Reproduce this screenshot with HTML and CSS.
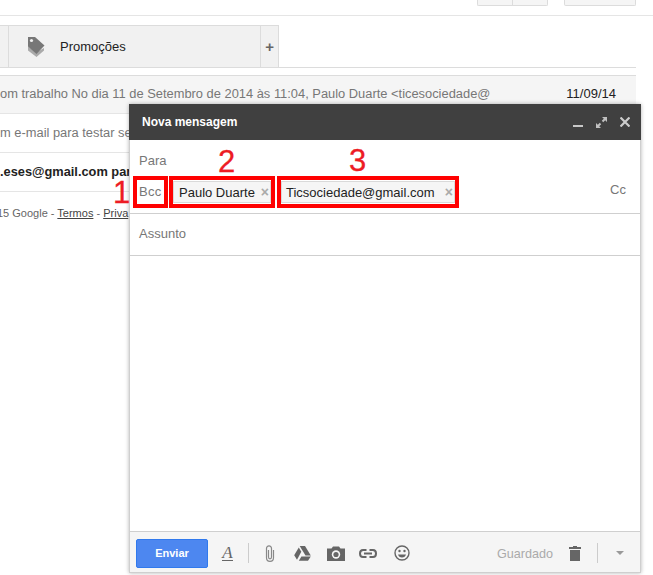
FILE: index.html
```html
<!DOCTYPE html>
<html lang="pt">
<head>
  <meta charset="UTF-8">
  <meta name="viewport" content="width=device-width, initial-scale=1">
  <title>Nova mensagem</title>
  <link rel="stylesheet" href="styles.css">
</head>
<body>
  <!-- Inbox behind the compose window -->
  <div class="topbar">
    <div class="btn-group">
      <div class="top-btn"></div>
      <div class="top-btn"></div>
    </div>
    <div class="top-btn top-btn-wide"></div>
  </div>

  <div class="tabs">
    <div class="tab tab-stub"></div>
    <div class="tab tab-promo">
      <svg class="tag-icon" width="18" height="22" viewBox="0 0 18 22">
        <path fill="#aaa" d="M1 10.5 L9 16.5 L17 12 L17 14.5 L9.500 21 L1 14.500 Z"/>
        <path fill="#777" d="M1 1 L8 1 L17.500 9.500 L9.500 18 L1 10.500 Z"/>
        <circle cx="4.500" cy="4.500" r="1.600" fill="#f1f1f1"/>
      </svg>
      <span>Promoções</span>
    </div>
    <div class="tab tab-add">+</div>
  </div>

  <div class="mail-list">
    <div class="mail-row mail-row-read">
      <span class="snippet">om trabalho No dia 11 de Setembro de 2014 às 11:04, Paulo Duarte &lt;ticesociedade@</span>
      <span class="mail-date">11/09/14</span>
    </div>
    <div class="mail-row">
      <span class="snippet">m e-mail para testar se</span>
    </div>
    <div class="mail-row">
      <span class="sender">.eses@gmail.com par</span>
    </div>
  </div>
  <div class="footer-links">15 Google - <a href="#">Termos</a> - <a href="#">Priva</a></div>

  <!-- Compose window -->
  <section class="compose">
    <header class="compose-head">
      <span class="compose-title">Nova mensagem</span>
      <div class="head-icons">
        <svg width="10" height="11" viewBox="0 0 10 11"><rect x="0" y="8" width="10" height="2" fill="#c8c8c8"/></svg>
        <svg width="11" height="11" viewBox="0 0 11 11" fill="#c0c0c0">
          <path d="M6 0 H11 V5 L9.200 3.200 L7.200 5.200 L5.800 3.800 L7.800 1.800 Z"/>
          <path d="M5 11 H0 V6 L1.800 7.800 L3.800 5.800 L5.200 7.200 L3.200 9.200 Z"/>
        </svg>
        <svg width="10" height="10" viewBox="0 0 10 10"><path d="M0.500 0.500 L9.500 9.500 M9.500 0.500 L0.500 9.500" stroke="#ccc" stroke-width="2.200"/></svg>
      </div>
    </header>

    <div class="field field-para">Para</div>
    <div class="field-recipients">
      <span class="label-bcc">Bcc</span>
      <span class="chip chip-first">Paulo Duarte<i class="chip-x">×</i></span>
      <span class="chip chip-second">Ticsociedade@gmail.com<i class="chip-x">×</i></span>
      <span class="label-cc">Cc</span>
    </div>
    <div class="field field-subject">Assunto</div>
    <div class="compose-body"></div>

    <footer class="compose-tools">
      <button class="send-btn">Enviar</button>
      <span class="format-a">A</span>
      <span class="tool-sep"></span>
      <svg class="tool tool-clip" width="10" height="17" viewBox="0 0 10 17" fill="none" stroke="#888" stroke-width="1.200">
        <path d="M8.500 5 V12.500 C8.500 15 7 16.400 5 16.400 C3 16.400 1.500 15 1.500 12.500 V3.500 C1.500 2 2.500 0.800 4 0.800 C5.500 0.800 6.500 2 6.500 3.500 V12 C6.500 13 6 13.800 5 13.800 C4 13.800 3.500 13 3.500 12 V5"/>
      </svg>
      <svg class="tool tool-drive" width="17" height="15" viewBox="0 0 17 15" fill="#666">
        <path d="M5.700 0 H11 L16.800 9.500 H11.500 Z"/>
        <path d="M4.800 1.500 L7.300 5.800 L3 13.800 L0.200 9.300 Z"/>
        <path d="M7.400 10.500 H16.800 L14 14.800 H4.800 Z"/>
      </svg>
      <svg class="tool tool-camera" width="18" height="15" viewBox="0 0 18 15">
        <path fill="#666" d="M0 2.500 H4.500 L6 0.500 H12 L13.500 2.500 H18 V15 H0 Z"/>
        <circle cx="9" cy="8.500" r="4.200" fill="#f5f5f5"/>
        <circle cx="9" cy="8.500" r="2.600" fill="#666"/>
      </svg>
      <svg class="tool tool-link" width="18" height="9" viewBox="0 0 18 9" fill="none" stroke="#666" stroke-width="2">
        <path d="M7.500 1 H4 C2 1 1 2.500 1 4.500 C1 6.500 2 8 4 8 H7.500"/>
        <path d="M10.500 1 H14 C16 1 17 2.500 17 4.500 C17 6.500 16 8 14 8 H10.500"/>
        <path d="M5 4.500 H13"/>
      </svg>
      <svg class="tool tool-smile" width="16" height="16" viewBox="0 0 16 16">
        <circle cx="8" cy="8" r="7" fill="none" stroke="#666" stroke-width="1.400"/>
        <circle cx="5.500" cy="6" r="1.200" fill="#666"/>
        <circle cx="10.500" cy="6" r="1.200" fill="#666"/>
        <path d="M4 9.500 H12 C11.500 11.500 10 12.500 8 12.500 C6 12.500 4.500 11.500 4 9.500 Z" fill="#666"/>
      </svg>
      <span class="saved">Guardado</span>
      <svg class="tool-trash" width="12" height="15" viewBox="0 0 12 15" fill="#666">
        <path d="M4 0 H8 V1 H12 V3 H0 V1 H4 Z"/>
        <path d="M1 4 H11 V15 H1 Z"/>
      </svg>
      <span class="tool-sep tool-sep-right"></span>
      <span class="more-arrow"></span>
    </footer>

    <!-- Numbered red markers drawn on top of the recipients -->
    <div class="mark mark-bcc"></div>
    <div class="mark mark-first"></div>
    <div class="mark mark-second"></div>
  </section>
  <span class="mark-num num-1">1</span>
  <span class="mark-num num-2">2</span>
  <span class="mark-num num-3">3</span>
</body>
</html>
```

FILE: styles.css
```css
/* Basic reset */
html, body {
  height: 575px;
  overflow: hidden;
}
body {
  margin: 0;
  background-color: white;
  font-family: "Liberation Sans", Arial, sans-serif;
  font-size: 13px;
  color: #222;
  position: relative;
}

/* Top toolbar, mostly scrolled off */
.topbar {
  height: 15px;
  border-bottom: 1px solid #e5e5e5;
  display: flex;
  justify-content: flex-end;
  align-items: flex-start;
  gap: 16px;
  padding-right: 17px;
  box-sizing: content-box;
}
.btn-group {
  display: flex;
}
.top-btn {
  width: 34px;
  height: 5px;
  background-color: #f5f5f5;
  border: 1px solid #dcdcdc;
  border-top: 0;
  border-radius: 0 0 2px 0;
}
.top-btn:first-child {
  border-right: 0;
  border-radius: 0 0 0 2px;
}
.top-btn-wide {
  width: 70px;
  border-radius: 0 0 2px 2px;
}

/* Inbox tabs */
.tabs {
  display: flex;
  width: 279px;
  height: 41px;
  margin-top: 9px;
  background-color: #f1f1f1;
  border-top: 1px solid #dcdcdc;
}
.tab {
  border-right: 1px solid #dcdcdc;
  display: flex;
  align-items: center;
}
.tab-stub {
  width: 8px;
}
.tab-promo {
  width: 252px;
  font-size: 13px;
  color: #222;
}
.tag-icon {
  margin-left: 18px;
  margin-right: 15px;
}
.tab-add {
  width: 17px;
  border-right: 1px solid #dcdcdc;
  justify-content: center;
  font-size: 15px;
  font-weight: bold;
  color: #666;
}

/* Message rows */
.mail-list {
  width: 636px;
  margin-top: 0;
  border-top: 1px solid #dcdcdc;
  padding-top: 7px;
}
.mail-row {
  height: 39px;
  box-sizing: border-box;
  border-bottom: 1px solid #e5e5e5;
  display: flex;
  align-items: center;
  justify-content: space-between;
  white-space: nowrap;
  padding-bottom: 2px;
}
.mail-row-read {
  background-color: #f5f5f5;
  border-top: 1px solid #dcdcdc;
  padding-right: 20px;
}
.snippet {
  font-size: 12.880px;
  color: #777;
}
.mail-date {
  font-size: 13px;
  color: #222;
}
.sender {
  font-size: 12.800px;
  font-weight: bold;
  color: #222;
}
.footer-links {
  margin: 15px 0 0 -3px;
  font-size: 11px;
  color: #666;
  white-space: nowrap;
}
.footer-links a {
  color: #444;
}

/* Compose window */
.compose {
  position: absolute;
  left: 129px;
  top: 104px;
  width: 512px;
  height: 469px;
  box-sizing: border-box;
  display: flex;
  flex-direction: column;
  background-color: white;
  border: solid #cfcfcf;
  border-width: 0 1px 0 1px;
  box-shadow: 0 0 4px rgba(0,0,0,0.3);
}
.compose-head {
  height: 36px;
  flex: none;
  margin: 0 -1px;
  padding: 0 11px 0 13px;
  background-color: #404040;
  display: flex;
  align-items: center;
  justify-content: space-between;
}
.compose-title {
  font-size: 12px;
  font-weight: bold;
  color: #fff;
}
.head-icons {
  display: flex;
  align-items: center;
  gap: 13px;
}
.field {
  flex: none;
  padding-left: 9px;
  color: #777;
  font-size: 13px;
}
.field-para {
  height: 31px;
  line-height: 42px;
}
.field-recipients {
  height: 43px;
  flex: none;
  box-sizing: border-box;
  border-bottom: 1px solid #cfcfcf;
  display: flex;
  align-items: flex-start;
  padding: 10px 14px 0 9px;
  color: #777;
}
.label-bcc {
  width: 34px;
  line-height: 21px;
  letter-spacing: 0.300px;
}
.chip {
  box-sizing: border-box;
  height: 22px;
  display: flex;
  align-items: center;
  padding-left: 5px;
  background-color: #f5f5f5;
  border: 1px solid #d9d9d9;
  color: #222;
  font-size: 13px;
}
.chip-first {
  width: 98px;
}
.chip-second {
  width: 174px;
  margin-left: 10px;
  padding-left: 4px;
}
.chip-x {
  margin-left: auto;
  margin-right: 1px;
  font-style: normal;
  font-weight: bold;
  font-size: 14px;
  line-height: 16px;
  color: #aaa;
}
.label-cc {
  margin-left: auto;
  line-height: 18px;
}
.field-subject {
  height: 42px;
  box-sizing: border-box;
  line-height: 39px;
  border-bottom: 1px solid #cfcfcf;
}
.compose-body {
  flex: 1;
}

/* Bottom toolbar */
.compose-tools {
  height: 42px;
  flex: none;
  box-sizing: border-box;
  display: flex;
  align-items: center;
  padding: 2px 16px 0 6px;
  background-color: #f5f5f5;
  border-top: 1px solid #cfcfcf;
  border-bottom: 1px solid #cfcfcf;
}
.send-btn {
  width: 72px;
  height: 29px;
  padding: 0;
  font-family: inherit;
  font-size: 11px;
  font-weight: bold;
  color: white;
  background-color: #4d87f0;
  border: 1px solid #3079ed;
  border-radius: 2px;
}
.format-a {
  width: 11px;
  margin-left: 14px;
  text-align: center;
  font-family: "Liberation Serif", serif;
  font-style: italic;
  font-size: 17px;
  color: #666;
  border-bottom: 1px solid #666;
  line-height: 14px;
}
.tool-sep {
  width: 1px;
  height: 20px;
  margin-left: 15px;
  background-color: #ccc;
}
.tool-clip { margin-left: 16px; }
.tool-drive { margin-left: 19px; }
.tool-camera { margin-left: 16px; }
.tool-link { margin-left: 14px; }
.tool-smile { margin-left: 17px; }
.saved {
  margin-left: auto;
  padding-top: 2px;
  font-size: 12.600px;
  color: #aaa;
}
.tool-trash {
  margin-left: 16px;
}
.tool-sep-right {
  margin-left: 16px;
}
.more-arrow {
  margin-left: 18px;
  width: 0;
  height: 0;
  border-left: 4px solid transparent;
  border-right: 4px solid transparent;
  border-top: 4px solid #999;
}

/* Red annotation boxes and numbers */
.mark {
  position: absolute;
  box-sizing: border-box;
  top: 72px;
  height: 32px;
  border: 4px solid #f00;
}
.mark-bcc {
  left: 3px;
  width: 35px;
}
.mark-first {
  left: 39px;
  width: 106px;
}
.mark-second {
  left: 147px;
  width: 182px;
}
.mark-num {
  position: absolute;
  font-size: 31px;
  line-height: 22px;
  color: #ed1c24;
  -webkit-text-stroke: 0.300px #ed1c24;
}
.num-1 { left: 113px; top: 182px; }
.num-2 { left: 218px; top: 151px; }
.num-3 { left: 349px; top: 150px; }
```
